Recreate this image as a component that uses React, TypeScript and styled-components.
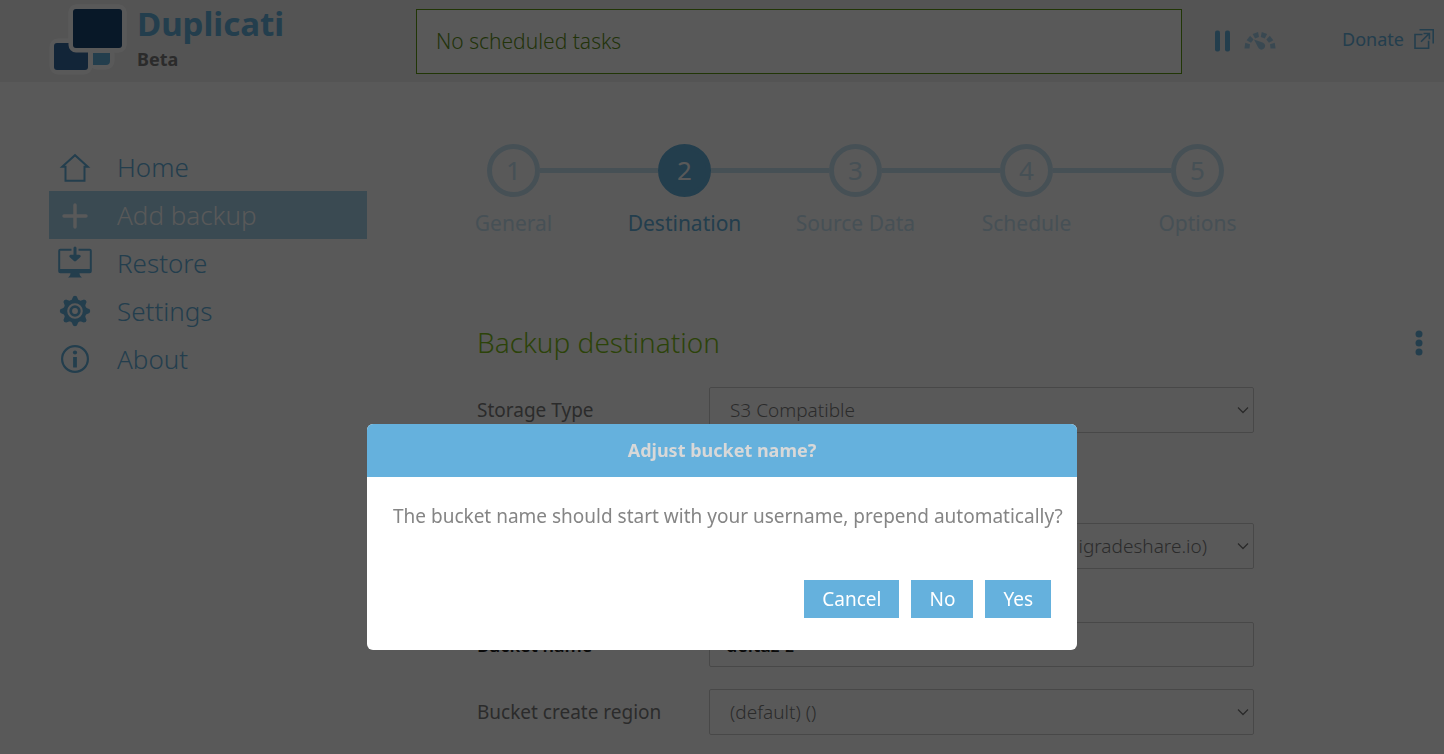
import React from "react";
import styled, { createGlobalStyle } from "styled-components";

const BLUE = "#65b1dd";
const PALE = "#c8e4f4";
const GREEN = "#7fbf1a";

const GlobalStyle = createGlobalStyle`
  *, *::before, *::after { box-sizing: border-box; }
  body {
    margin: 0;
    background: #fff;
    color: #7c7c7c;
    font-family: "Noto Sans", "Open Sans", sans-serif;
    font-weight: 300;
    font-size: 19px;
  }
  a { color: inherit; text-decoration: none; }
  button, input, select { font: inherit; color: inherit; }
`;

const Page = styled.div`
  height: 100vh;
  overflow: hidden;
`;

const Header = styled.header`
  display: flex;
  align-items: flex-start;
  height: 82px;
  background: #f0f0f0;
`;

const Brand = styled.a`
  display: flex;
  gap: 10px;
  width: 416px;
  padding: 4px 0 0 48px;
`;

const BrandText = styled.div`
  display: flex;
  flex-direction: column;
`;

const BrandName = styled.span`
  color: ${BLUE};
  font-size: 33px;
  line-height: 40px;
  font-weight: 700;
`;

const BrandChannel = styled.span`
  font-size: 18px;
  line-height: 30px;
  font-weight: 700;
`;

const Status = styled.div`
  flex: 1;
  height: 65px;
  margin-top: 9px;
  padding: 0 19px;
  border: 1px solid #5f9a12;
  background: #fff;
  color: #62921c;
  font-size: 21px;
  line-height: 62px;
`;

const HeaderTools = styled.div`
  display: flex;
  align-items: center;
  justify-content: space-between;
  width: 262px;
  height: 82px;
  padding: 0 10px 0 32px;
`;

const ToolGroup = styled.div`
  display: flex;
  align-items: center;
  gap: 12px;
`;

const IconButton = styled.button<{ $faded?: boolean }>`
  display: flex;
  padding: 0;
  border: 0;
  background: none;
  color: ${(p) => (p.$faded ? "#a4cfe9" : BLUE)};
`;

const DonateLink = styled.a`
  display: flex;
  align-items: center;
  gap: 10px;
  padding-bottom: 5px;
  color: ${BLUE};
  font-size: 18px;
  line-height: 28px;
  font-weight: 400;
`;

const Body = styled.div`
  display: flex;
`;

const Sidebar = styled.nav`
  width: 318px;
  flex: none;
  margin: 61px 61px 0 49px;
`;

const NavItem = styled.a<{ $active?: boolean }>`
  display: flex;
  align-items: center;
  gap: 24px;
  height: 48px;
  padding-left: 8px;
  font-size: 26px;
  background: ${(p) => (p.$active ? "#a5d3ec" : "transparent")};
  color: ${(p) => (p.$active ? "#fff" : BLUE)};
`;

const Main = styled.main`
  flex: 1;
  min-width: 0;
  padding-top: 62px;
`;

const Steps = styled.ol`
  display: flex;
  margin: 0;
  padding: 0;
  list-style: none;
`;

const Step = styled.li<{ $active?: boolean }>`
  display: flex;
  flex-direction: column;
  align-items: center;
  width: 171px;
  font-weight: 400;
  font-size: 21px;
  line-height: 28px;
  color: ${(p) => (p.$active ? BLUE : PALE)};
`;

const StepTrack = styled.div`
  display: flex;
  align-items: center;
  width: 100%;
  margin-bottom: 12px;
`;

const StepLine = styled.span<{ $hidden?: boolean }>`
  flex: 1;
  height: 5px;
  background: ${(p) => (p.$hidden ? "transparent" : PALE)};
`;

const StepCircle = styled.span<{ $active?: boolean }>`
  display: flex;
  align-items: center;
  justify-content: center;
  width: 53px;
  height: 53px;
  padding-bottom: 2px;
  border: 5px solid ${(p) => (p.$active ? BLUE : PALE)};
  border-radius: 50%;
  background: ${(p) => (p.$active ? BLUE : "transparent")};
  color: ${(p) => (p.$active ? "#fff" : PALE)};
  font-size: 26px;
`;

const Section = styled.section`
  padding: 86px 20px 0 49px;
`;

const SectionHead = styled.div`
  display: flex;
  align-items: center;
  justify-content: space-between;
  height: 40px;
  margin-bottom: 24px;
  color: ${BLUE};
`;

const Heading = styled.h2`
  margin: 0;
  padding-bottom: 2px;
  color: ${GREEN};
  font-size: 28px;
  font-weight: 300;
`;

const Row = styled.div<{ $gap?: number }>`
  display: flex;
  align-items: center;
  margin-bottom: ${(p) => p.$gap ?? 22}px;
`;

const Label = styled.label<{ $strong?: boolean }>`
  flex: none;
  width: 232px;
  line-height: 26px;
  font-size: ${(p) => (p.$strong ? 18 : 19)}px;
  font-weight: ${(p) => (p.$strong ? 600 : 400)};
  color: ${(p) => (p.$strong ? "#222" : "inherit")};
`;

const SelectBox = styled.div`
  display: grid;
  align-items: center;
  width: 545px;

  > * { grid-area: 1 / 1; }
  > svg { justify-self: end; margin-right: 5px; pointer-events: none; }
`;

const Select = styled.select<{ $end?: boolean }>`
  width: 100%;
  height: 46px;
  padding: 0 46px 0 20px;
  border: 1px solid #cfcfcf;
  border-radius: 2px;
  background: #fff;
  appearance: none;
  text-align-last: ${(p) => (p.$end ? "right" : "left")};
`;

const Input = styled.input`
  width: 545px;
  height: 45px;
  padding: 0 16px;
  border: 1px solid #cfcfcf;
  border-radius: 2px;
  background: #fff;
  color: #222;
  font-size: 18px;
  font-weight: 600;
`;

const Overlay = styled.div`
  position: fixed;
  inset: 0;
  display: flex;
  align-items: flex-start;
  justify-content: center;
  padding-top: 424px;
  background: rgba(0, 0, 0, 0.65);
`;

const Dialog = styled.div`
  width: 710px;
  overflow: hidden;
  border-radius: 6px;
  background: #fff;
`;

const DialogTitle = styled.h3`
  margin: 0;
  background: ${BLUE};
  color: #d8d8d8;
  font-size: 18px;
  line-height: 53px;
  font-weight: 700;
  text-align: center;
`;

const DialogText = styled.p`
  margin: 0;
  padding: 25px 8px 0 26px;
  color: #858585;
  line-height: 28px;
  font-weight: 400;
`;

const DialogActions = styled.div`
  display: flex;
  justify-content: flex-end;
  gap: 12px;
  padding: 50px 26px 32px;
`;

const DialogButton = styled.button`
  height: 38px;
  padding: 0 18px;
  border: 0;
  background: ${BLUE};
  color: #fff;
  font-weight: 400;
`;

const Logo = () => (
  <svg width="79" height="72" viewBox="48 4 79 72" aria-hidden="true">
    <g stroke="#fff" strokeWidth="9" strokeLinejoin="round" fill="#fff">
      <rect x="54" y="43" width="34" height="27" rx="4" />
      <rect x="93" y="50" width="17" height="15" rx="4" />
      <rect x="73" y="9" width="49" height="39" rx="4" />
    </g>
    <path d="M93 53h17v8a4 4 0 0 1-4 4H93z" fill={BLUE} />
    <rect x="54" y="43" width="34" height="27" rx="3" fill="#366aa0" />
    <rect x="73" y="9" width="49" height="39" rx="3" fill="#174572" stroke="#fff" strokeWidth="9" paintOrder="stroke" />
  </svg>
);

const Pause = () => (
  <svg width="17" height="22" viewBox="0 0 17 22" fill="currentColor" aria-hidden="true">
    <rect x="1" y="0.500" width="5" height="21" rx="2" />
    <rect x="11" y="0.500" width="5" height="21" rx="2" />
  </svg>
);

const gaugeMarks = [
  [4.3, 15, -82],
  [7.3, 8.6, -52],
  [13.2, 4.4, -20],
  [20.6, 4.4, 20],
  [26.6, 8.6, 52],
  [29.7, 15, 82],
];

const Gauge = () => (
  <svg width="34" height="20" viewBox="0 0 34 20" fill="currentColor" aria-hidden="true">
    {gaugeMarks.map(([x, y, a]) => (
      <path key={a} d="M-2.900-2.500h5.800l-.8 5h-4.200z" transform={`translate(${x} ${y}) rotate(${a})`} />
    ))}
    <path d="M11 8.500l8.600 2.900a3.700 3.700 0 1 1-4.700 4.600z" />
  </svg>
);

const External = () => (
  <svg width="20" height="20" viewBox="0 0 20 20" fill="none" stroke="currentColor" strokeWidth="1.600" aria-hidden="true">
    <path d="M8.500 5.500H1v13.700h13.600v-7.400" />
    <path d="M5.500 .8h13.700v13.600" />
    <path d="M7 12.700l8-8M9.500 4.500h5.900v5.800" />
  </svg>
);

const HomeIcon = () => (
  <svg width="36" height="36" viewBox="0 0 36 36" fill="none" stroke="currentColor" strokeWidth="2" aria-hidden="true">
    <path d="M8.500 17.700H5.200L18 6.200l12.800 11.500h-3.300v14h-19V17.700z" />
  </svg>
);

const PlusIcon = () => (
  <svg width="36" height="36" viewBox="0 0 36 36" stroke="currentColor" strokeWidth="3.400" strokeLinecap="round" aria-hidden="true">
    <path d="M18 8v22M7 19h22" />
  </svg>
);

const RestoreIcon = () => (
  <svg width="36" height="36" viewBox="0 0 36 36" aria-hidden="true">
    <path d="M14.500 4.800H3.200a1 1 0 0 0-1 1v20.400a1 1 0 0 0 1 1h29.600a1 1 0 0 0 1-1V5.800a1 1 0 0 0-1-1H21.500" fill="none" stroke="currentColor" strokeWidth="2" />
    <path d="M2 24h32v4H22.500c0 2 .8 3 2.500 4.500H11c1.700-1.500 2.500-2.500 2.500-4.500H2z" fill="currentColor" />
    <path d="M18 3V13M13.800 11.200L18 15l4.200-3.800z" fill="currentColor" stroke="currentColor" strokeWidth="3" strokeLinecap="round" strokeLinejoin="round" />
  </svg>
);

const SettingsIcon = () => (
  <svg width="36" height="36" viewBox="-18 -18 36 36" aria-hidden="true">
    <g fill="currentColor">
      {[0, 45, 90, 135, 180, 225, 270, 315].map((a) => (
        <path key={a} d="M-4.500-10C-2.800-11.500-2.600-13-1.900-14.500Q0-16 1.900-14.500C2.600-13 2.800-11.500 4.500-10z" transform={`rotate(${a})`} />
      ))}
    </g>
    <circle r="9.600" fill="none" stroke="currentColor" strokeWidth="3.600" />
    <circle r="4.300" fill="none" stroke="currentColor" strokeWidth="2.800" />
  </svg>
);

const AboutIcon = () => (
  <svg width="36" height="36" viewBox="0 0 36 36" fill="none" stroke="currentColor" aria-hidden="true">
    <circle cx="18" cy="18" r="12.900" strokeWidth="2.200" />
    <path d="M18 16v10.500" strokeWidth="3.800" />
    <circle cx="18" cy="11.500" r="2.100" fill="currentColor" stroke="none" />
  </svg>
);

const MoreIcon = () => (
  <svg width="10" height="28" viewBox="0 0 10 28" fill="currentColor" aria-hidden="true">
    <circle cx="5" cy="5" r="3.500" />
    <circle cx="5" cy="14" r="3.500" />
    <circle cx="5" cy="23" r="3.500" />
  </svg>
);

const Chevron = () => (
  <svg width="12" height="8" viewBox="0 0 12 8" fill="none" stroke="#777" strokeWidth="1.300" aria-hidden="true">
    <path d="M1 1.500l5 5 5-5" />
  </svg>
);

const navItems = [
  { label: "Home", icon: <HomeIcon /> },
  { label: "Add backup", icon: <PlusIcon />, active: true },
  { label: "Restore", icon: <RestoreIcon /> },
  { label: "Settings", icon: <SettingsIcon /> },
  { label: "About", icon: <AboutIcon /> },
];

const steps = ["General", "Destination", "Source Data", "Schedule", "Options"];

export default function App() {
  return (
    <>
      <GlobalStyle />
      <Page>
        <Header>
          <Brand href="#">
            <Logo />
            <BrandText>
              <BrandName>Duplicati</BrandName>
              <BrandChannel>Beta</BrandChannel>
            </BrandText>
          </Brand>
          <Status>No scheduled tasks</Status>
          <HeaderTools>
            <ToolGroup>
              <IconButton aria-label="Pause"><Pause /></IconButton>
              <IconButton aria-label="Throttle" $faded><Gauge /></IconButton>
            </ToolGroup>
            <DonateLink href="#">Donate <External /></DonateLink>
          </HeaderTools>
        </Header>
        <Body>
          <Sidebar>
            {navItems.map((n) => (
              <NavItem key={n.label} href="#" $active={n.active}>
                {n.icon}
                {n.label}
              </NavItem>
            ))}
          </Sidebar>
          <Main>
            <Steps>
              {steps.map((s, i) => (
                <Step key={s} $active={i === 1}>
                  <StepTrack>
                    <StepLine $hidden={i === 0} />
                    <StepCircle $active={i === 1}>{i + 1}</StepCircle>
                    <StepLine $hidden={i === steps.length - 1} />
                  </StepTrack>
                  {s}
                </Step>
              ))}
            </Steps>
            <Section>
              <SectionHead>
                <Heading>Backup destination</Heading>
                <IconButton aria-label="More options"><MoreIcon /></IconButton>
              </SectionHead>
              <Row $gap={90}>
                <Label htmlFor="type">Storage Type</Label>
                <SelectBox>
                  <Select id="type"><option>S3 Compatible</option></Select>
                  <Chevron />
                </SelectBox>
              </Row>
              <Row $gap={53}>
                <Label htmlFor="server">Server</Label>
                <SelectBox>
                  <Select id="server" $end><option>igradeshare.io)</option></Select>
                  <Chevron />
                </SelectBox>
              </Row>
              <Row>
                <Label htmlFor="bucket" $strong>Bucket name</Label>
                <Input id="bucket" defaultValue="deltaz-z" />
              </Row>
              <Row>
                <Label htmlFor="region">Bucket create region</Label>
                <SelectBox>
                  <Select id="region"><option>(default) ()</option></Select>
                  <Chevron />
                </SelectBox>
              </Row>
            </Section>
          </Main>
        </Body>
      </Page>
      <Overlay>
        <Dialog role="dialog" aria-modal="true" aria-labelledby="dialog-title">
          <DialogTitle id="dialog-title">Adjust bucket name?</DialogTitle>
          <DialogText>The bucket name should start with your username, prepend automatically?</DialogText>
          <DialogActions>
            <DialogButton>Cancel</DialogButton>
            <DialogButton>No</DialogButton>
            <DialogButton>Yes</DialogButton>
          </DialogActions>
        </Dialog>
      </Overlay>
    </>
  );
}
